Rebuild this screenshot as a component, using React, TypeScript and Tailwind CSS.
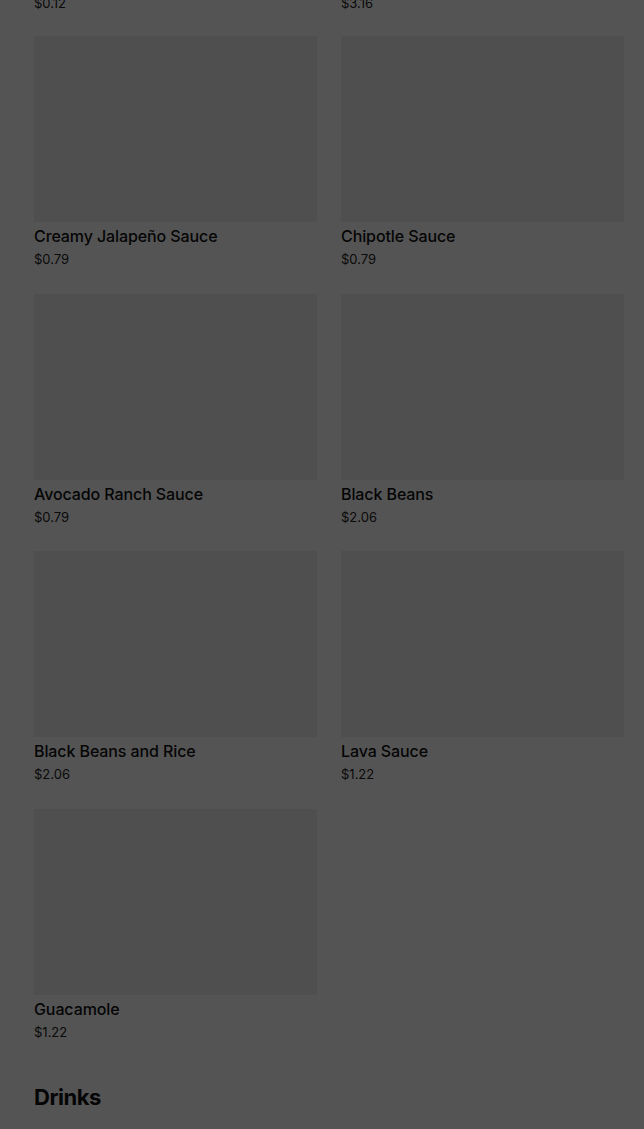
import React from "react";

const items = [
  { name: "Creamy Jalapeño Sauce", price: "$0.79" },
  { name: "Chipotle Sauce", price: "$0.79" },
  { name: "Avocado Ranch Sauce", price: "$0.79" },
  { name: "Black Beans", price: "$2.06" },
  { name: "Black Beans and Rice", price: "$2.06" },
  { name: "Lava Sauce", price: "$1.22" },
  { name: "Guacamole", price: "$1.22" },
];

function Card({ name, price }: { name: string; price: string }) {
  return (
    <div className="flex flex-col">
      <div className="h-[186px] w-full bg-[#eeeeee]" />
      <div className="mt-[4px] text-[16px] leading-[20px] font-medium tracking-[-0.1px] text-[#111]">{name}</div>
      <div className="mt-[5px] text-[13px] leading-[16px] text-[#222]">{price}</div>
    </div>
  );
}

export default function App() {
  return (
    <div className="relative h-[1129px] w-full overflow-hidden bg-white" style={{ fontFamily: "Inter, 'Liberation Sans', sans-serif" }}>
      <div className="pl-[34px]">
        <div className="grid grid-cols-[283px_283px] gap-x-6 mt-[-5px] text-[13px] leading-[16px] text-[#222]">
          <div>$0.12</div>
          <div>$3.16</div>
        </div>
        <div className="grid grid-cols-[283px_283px] gap-x-6 gap-y-[26.7px] mt-[25px]">
          {items.map((it) => (
            <Card key={it.name} {...it} />
          ))}
        </div>
        <h2 className="mt-[42px] text-[22px] leading-[30px] font-bold tracking-[-0.5px] text-[#111]">Drinks</h2>
      </div>
      <div className="fixed inset-0 bg-black/[0.67]" />
    </div>
  );
}
